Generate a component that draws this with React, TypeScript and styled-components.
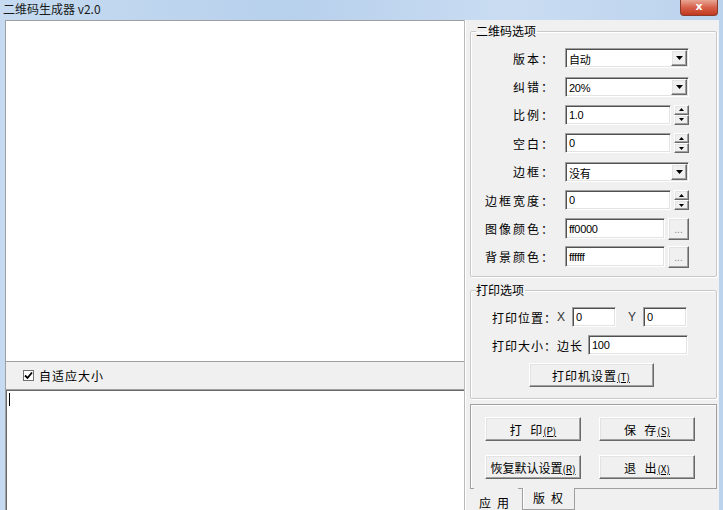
import React from "react";
import styled, { createGlobalStyle } from "styled-components";

const GlobalStyle = createGlobalStyle`
  html, body {
    margin: 0;
    padding: 0;
  }
  body {
    width: 723px;
    height: 510px;
    overflow: hidden;
    font-family: "Noto Sans CJK SC", "Noto Sans", sans-serif;
    font-size: 12px;
    color: #000;
  }
`;

const Window = styled.div`
  width: 723px;
  height: 510px;
  display: flex;
  flex-direction: column;
  background: linear-gradient(90deg, #c6dbf1, #b7d0ec 40%, #c9dcf2 70%, #bcd3ed);
  overflow: hidden;
`;

const TitleBar = styled.div`
  height: 20px;
  flex: 0 0 20px;
  display: flex;
  align-items: center;
  padding-left: 3px;
  position: relative;
`;

const Title = styled.span`
  font-size: 12px;
  line-height: 14px;
  color: #1a1a1a;
  margin-top: -3px;
`;

const CloseButton = styled.div`
  position: absolute;
  top: 0;
  right: 5px;
  width: 38px;
  height: 16px;
  border: 1px solid #8a3a2c;
  border-top: none;
  border-radius: 0 0 4px 4px;
  background: linear-gradient(#e8a593, #d7604a 50%, #c2381f);
  color: #fff;
  font-family: "DejaVu Sans", sans-serif;
  font-weight: bold;
  font-size: 11px;
  line-height: 14px;
  text-align: center;
  box-sizing: border-box;
`;

const Client = styled.div`
  flex: 1;
  display: flex;
  margin: 0 4px 0 5px;
  background: #f0f0f0;
  min-height: 0;
`;

const LeftPane = styled.div`
  width: 460px;
  flex: 0 0 460px;
  display: flex;
  flex-direction: column;
  border-right: 1px solid #b9b9b9;
  box-sizing: border-box;
`;

const ImageArea = styled.div`
  flex: 0 0 342px;
  background: #fff;
  border-top: 1px solid #a0a0a0;
  border-left: 1px solid #a0a0a0;
  border-bottom: 1px solid #a0a0a0;
  box-sizing: border-box;
`;

const CheckRow = styled.label`
  flex: 0 0 27px;
  display: flex;
  align-items: center;
  padding-left: 17px;
  gap: 5px;
  letter-spacing: 1px;
  font-size: 12px;
  border-left: 1px solid #a0a0a0;
`;

const CheckBox = styled.span`
  width: 11px;
  height: 11px;
  box-sizing: border-box;
  border: 1px solid #707070;
  background: #fff;
  display: flex;
  align-items: center;
  justify-content: center;
`;

const TextArea = styled.div`
  flex: 1;
  background: #fff;
  border-top: 1px solid #a0a0a0;
  border-left: 1px solid #a0a0a0;
  box-shadow: inset 1px 1px 0 #696969;
  padding: 3px 0 0 3px;
`;

const Caret = styled.div`
  width: 1px;
  height: 13px;
  background: #000;
`;

const RightPane = styled.div`
  flex: 1;
  display: flex;
  flex-direction: column;
  padding: 0 2px 0 4px;
  border-left: 1px solid #fff;
`;

const Group = styled.fieldset<{ $top: number; $padBottom: number }>`
  margin: ${(p) => p.$top}px 0 0 0;
  padding: 0 0 ${(p) => p.$padBottom}px 0;
  border: 1px solid #c8c8c8;
  border-radius: 2px;
  box-shadow: inset 1px 1px 0 #fff, 1px 1px 0 #fff;
  min-width: 0;
`;

const Legend = styled.legend`
  padding: 0 1px 0 0;
  margin-left: 5px;
  font-size: 12px;
  line-height: 14px;
`;

const Rows = styled.div`
  padding-top: 6px;
  display: flex;
  flex-direction: column;
`;

const Row = styled.div`
  height: 28.4px;
  display: flex;
  align-items: center;
`;

const Label = styled.span`
  width: 84px;
  text-align: right;
  letter-spacing: 2px;
  font-size: 12px;
  margin-right: 10px;
  white-space: nowrap;
`;

const Sunken = styled.div<{ $w: number; $h?: number; $gap?: number }>`
  width: ${(p) => p.$w}px;
  height: ${(p) => p.$h ?? 20}px;
  margin-left: ${(p) => p.$gap ?? 0}px;
  box-sizing: border-box;
  background: #fff;
  border-top: 1px solid #a0a0a0;
  border-left: 1px solid #a0a0a0;
  border-bottom: 1px solid #fff;
  border-right: 1px solid #fff;
  box-shadow: inset 1px 1px 0 #505050, inset -1px -1px 0 #e3e3e3;
  display: flex;
  align-items: center;
  padding-left: 3px;
  font-family: "Liberation Sans", "Noto Sans CJK SC", sans-serif;
  font-size: 11px;
  letter-spacing: -0.3px;
  position: relative;
`;

const SelectValue = styled.span`
  flex: 1;
  padding-top: 2px;
`;

const Raised = styled.div<{ $w: number; $h: number }>`
  width: ${(p) => p.$w}px;
  height: ${(p) => p.$h}px;
  box-sizing: border-box;
  background: #f0f0f0;
  border-top: 1px solid #fff;
  border-left: 1px solid #fff;
  border-right: 1px solid #696969;
  border-bottom: 1px solid #696969;
  box-shadow: inset -1px -1px 0 #a0a0a0, inset 1px 1px 0 #e3e3e3;
  display: flex;
  align-items: center;
  justify-content: center;
  flex: 0 0 auto;
`;

const DropButton = styled(Raised)`
  margin-right: 1px;
`;

const SpinBox = styled.div`
  display: flex;
  align-items: center;
  gap: 3px;
`;

const SpinButtons = styled.div`
  display: flex;
  flex-direction: column;
`;

const ColorBox = styled.div`
  display: flex;
  align-items: center;
  gap: 3px;
`;

const Dots = styled.span`
  font-size: 10px;
  color: #888;
  font-family: "Liberation Sans", sans-serif;
  margin-top: 1px;
`;

const PrintRow = styled.div`
  height: 28px;
  display: flex;
  align-items: center;
  padding-left: 21px;
  font-size: 12px;
`;

const PrintLabel = styled.span`
  letter-spacing: 1px;
  white-space: nowrap;
`;

const Axis = styled.span<{ $left: number }>`
  margin: 0 7px 0 ${(p) => p.$left}px;
  font-family: "Liberation Sans", sans-serif;
  font-size: 12px;
  color: #333;
`;

const PushButton = styled.button<{ $w: number }>`
  width: ${(p) => p.$w}px;
  height: 24px;
  box-sizing: border-box;
  background: #f0f0f0;
  border-top: 1px solid #fff;
  border-left: 1px solid #fff;
  border-right: 1px solid #696969;
  border-bottom: 1px solid #696969;
  box-shadow: inset -1px -1px 0 #a0a0a0, inset 1px 1px 0 #e3e3e3;
  font-family: "Noto Sans CJK SC", sans-serif;
  font-size: 12px;
  letter-spacing: 1px;
  padding: 0;
  color: #000;
  white-space: pre;
`;

const Key = styled.span`
  font-size: 10px;
  letter-spacing: 0;
  text-decoration: underline;
`;

const CenterRow = styled.div`
  display: flex;
  justify-content: center;
  margin-top: 4px;
  padding-right: 5px;
`;

const TabPage = styled.div`
  margin-top: 5px;
  height: 86px;
  box-sizing: border-box;
  border: 1px solid #a0a0a0;
  box-shadow: inset 1px 1px 0 #fff;
  display: grid;
  grid-template-columns: 96px 96px;
  column-gap: 18px;
  row-gap: 14px;
  align-content: start;
  padding: 12px 0 0 14px;
`;

const TabStrip = styled.div`
  display: flex;
  align-items: flex-start;
  margin-top: -1px;
  padding-left: 4px;
`;

const Tab = styled.div<{ $active?: boolean }>`
  height: 22px;
  box-sizing: border-box;
  padding: ${(p) => (p.$active ? "8px 3px 0 5px" : "3px 5px 0 10px")};
  margin-left: ${(p) => (p.$active ? "0" : "4px")};
  background: #f0f0f0;
  border: ${(p) => (p.$active ? "none" : "1px solid #a0a0a0")};
  border-top: none;
  box-shadow: ${(p) => (p.$active ? "none" : "inset 1px 0 0 #fff")};
  font-size: 12px;
  line-height: 14px;
  letter-spacing: 6px;
  white-space: nowrap;
`;

const Arrow = ({ up, size = 3 }: { up?: boolean; size?: number }) => (
  <svg width={size * 2 + 1} height={size + 1} viewBox={`0 0 ${size * 2 + 1} ${size + 1}`}>
    <polygon
      points={up ? `0,${size + 1} ${size * 2 + 1},${size + 1} ${size + 0.5},0` : `0,0 ${size * 2 + 1},0 ${size + 0.5},${size + 1}`}
      fill="#000"
    />
  </svg>
);

const Select = ({ value }: { value: string }) => (
  <Sunken $w={124}>
    <SelectValue>{value}</SelectValue>
    <DropButton $w={16} $h={16}>
      <Arrow />
    </DropButton>
  </Sunken>
);

const Spin = ({ value }: { value: string }) => (
  <SpinBox>
    <Sunken $w={106}>{value}</Sunken>
    <SpinButtons>
      <Raised $w={15} $h={10}>
        <Arrow up size={2} />
      </Raised>
      <Raised $w={15} $h={10}>
        <Arrow size={2} />
      </Raised>
    </SpinButtons>
  </SpinBox>
);

const Color = ({ value }: { value: string }) => (
  <ColorBox>
    <Sunken $w={100} $h={21}>{value}</Sunken>
    <Raised $w={21} $h={22}>
      <Dots>...</Dots>
    </Raised>
  </ColorBox>
);

export default function App() {
  return (
    <>
      <GlobalStyle />
      <Window>
        <TitleBar>
          <Title>二维码生成器 v2.0</Title>
          <CloseButton>x</CloseButton>
        </TitleBar>
        <Client>
          <LeftPane>
            <ImageArea />
            <CheckRow>
              <CheckBox>
                <svg width="9" height="9" viewBox="0 0 9 9">
                  <path d="M1 4.5 L3.5 7 L8 1.5" stroke="#000" strokeWidth="1.8" fill="none" />
                </svg>
              </CheckBox>
              自适应大小
            </CheckRow>
            <TextArea>
              <Caret />
            </TextArea>
          </LeftPane>
          <RightPane>
            <Group $top={4} $padBottom={5}>
              <Legend>二维码选项</Legend>
              <Rows>
                <Row>
                  <Label>版本：</Label>
                  <Select value="自动" />
                </Row>
                <Row>
                  <Label>纠错：</Label>
                  <Select value="20%" />
                </Row>
                <Row>
                  <Label>比例：</Label>
                  <Spin value="1.0" />
                </Row>
                <Row>
                  <Label>空白：</Label>
                  <Spin value="0" />
                </Row>
                <Row>
                  <Label>边框：</Label>
                  <Select value="没有" />
                </Row>
                <Row>
                  <Label>边框宽度：</Label>
                  <Spin value="0" />
                </Row>
                <Row>
                  <Label>图像颜色：</Label>
                  <Color value="ff0000" />
                </Row>
                <Row>
                  <Label>背景颜色：</Label>
                  <Color value="ffffff" />
                </Row>
              </Rows>
            </Group>
            <Group $top={6} $padBottom={11}>
              <Legend>打印选项</Legend>
              <Rows>
                <PrintRow>
                  <PrintLabel>打印位置：</PrintLabel>
                  <Axis $left={0}>X</Axis>
                  <Sunken $w={44}>0</Sunken>
                  <Axis $left={12}>Y</Axis>
                  <Sunken $w={44}>0</Sunken>
                </PrintRow>
                <PrintRow>
                  <PrintLabel>打印大小：边长</PrintLabel>
                  <Sunken $w={100} $gap={5}>100</Sunken>
                </PrintRow>
                <CenterRow>
                  <PushButton $w={125}>
                    打印机设置<Key>(T)</Key>
                  </PushButton>
                </CenterRow>
              </Rows>
            </Group>
            <TabPage>
              <PushButton $w={96}>
                {"打  印"}<Key>(P)</Key>
              </PushButton>
              <PushButton $w={96}>
                {"保  存"}<Key>(S)</Key>
              </PushButton>
              <PushButton $w={96} style={{ letterSpacing: 0 }}>
                恢复默认设置<Key>(R)</Key>
              </PushButton>
              <PushButton $w={96}>
                {"退  出"}<Key>(X)</Key>
              </PushButton>
            </TabPage>
            <TabStrip>
              <Tab $active>应用</Tab>
              <Tab>版权</Tab>
            </TabStrip>
          </RightPane>
        </Client>
      </Window>
    </>
  );
}
